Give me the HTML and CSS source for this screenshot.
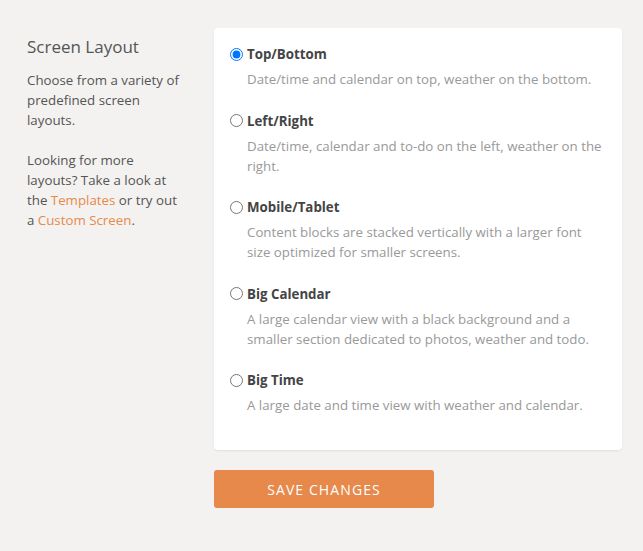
FILE: index.html
```html
<!DOCTYPE html>
<html>
<head>
<meta charset="utf-8">
<link rel="stylesheet" href="styles.css">
</head>
<body>
<div class="page">
  <aside class="intro">
    <h2 class="intro-title">Screen Layout</h2>
    <p class="intro-text">Choose from a variety of predefined screen layouts.</p>
    <p class="intro-text">Looking for more layouts? Take a look at the <a class="link" href="#">Templates</a> or try out a <a class="link" href="#">Custom Screen</a>.</p>
  </aside>
  <main class="main">
    <div class="card">
      <label class="option">
        <span class="option-head"><input class="radio" type="radio" name="layout" checked><span class="option-name">Top/Bottom</span></span>
        <span class="option-desc">Date/time and calendar on top, weather on the bottom.</span>
      </label>
      <label class="option">
        <span class="option-head"><input class="radio" type="radio" name="layout"><span class="option-name">Left/Right</span></span>
        <span class="option-desc">Date/time, calendar and to-do on the left, weather on the right.</span>
      </label>
      <label class="option">
        <span class="option-head"><input class="radio" type="radio" name="layout"><span class="option-name">Mobile/Tablet</span></span>
        <span class="option-desc">Content blocks are stacked vertically with a larger font size optimized for smaller screens.</span>
      </label>
      <label class="option">
        <span class="option-head"><input class="radio" type="radio" name="layout"><span class="option-name">Big Calendar</span></span>
        <span class="option-desc">A large calendar view with a black background and a smaller section dedicated to photos, weather and todo.</span>
      </label>
      <label class="option">
        <span class="option-head"><input class="radio" type="radio" name="layout"><span class="option-name">Big Time</span></span>
        <span class="option-desc">A large date and time view with weather and calendar.</span>
      </label>
    </div>
    <button class="save" type="button">SAVE CHANGES</button>
  </main>
</div>
</body>
</html>
```
FILE: styles.css
```css
html, body {
  margin: 0;
  padding: 0;
  background: #f3f2f0;
}
body {
  font-family: "Open Sans", "Noto Sans", sans-serif;
  font-size: 13.3px;
  line-height: 20px;
  color: #555;
}
.page {
  display: flex;
  padding: 28px 21px 0 27px;
  min-height: 523px;
}
.intro {
  width: 158px;
  flex: none;
  padding-top: 7px;
}
.intro-title {
  margin: 0 0 11px;
  font-size: 17px;
  line-height: 24px;
  font-weight: 400;
  color: #555;
}
.intro-text {
  margin: 0 0 20px;
  color: #555;
}
.link {
  color: #e8894a;
  text-decoration: none;
}
.main {
  margin-left: 29px;
  flex: 1;
}
.card {
  background: #fff;
  border-radius: 4px;
  box-shadow: 0 1px 2px rgba(0,0,0,0.08);
  padding: 16px 16px 35px;
  display: flex;
  flex-direction: column;
  gap: 21.5px;
}
.option {
  display: flex;
  flex-direction: column;
  gap: 5px;
  cursor: pointer;
}
.option-head {
  display: flex;
  align-items: center;
  gap: 4px;
}
.radio {
  margin: 0;
  width: 13px;
  height: 13px;
}
.option-name {
  font-weight: 700;
  color: #444;
}
.option-desc {
  padding-left: 17px;
  color: #999;
}
.save {
  margin-top: 20px;
  width: 220px;
  height: 38px;
  border: 0;
  border-radius: 3px;
  background: #e6894a;
  color: #fff;
  font-family: inherit;
  font-size: 14px;
  letter-spacing: 1.1px;
  cursor: pointer;
}
```
